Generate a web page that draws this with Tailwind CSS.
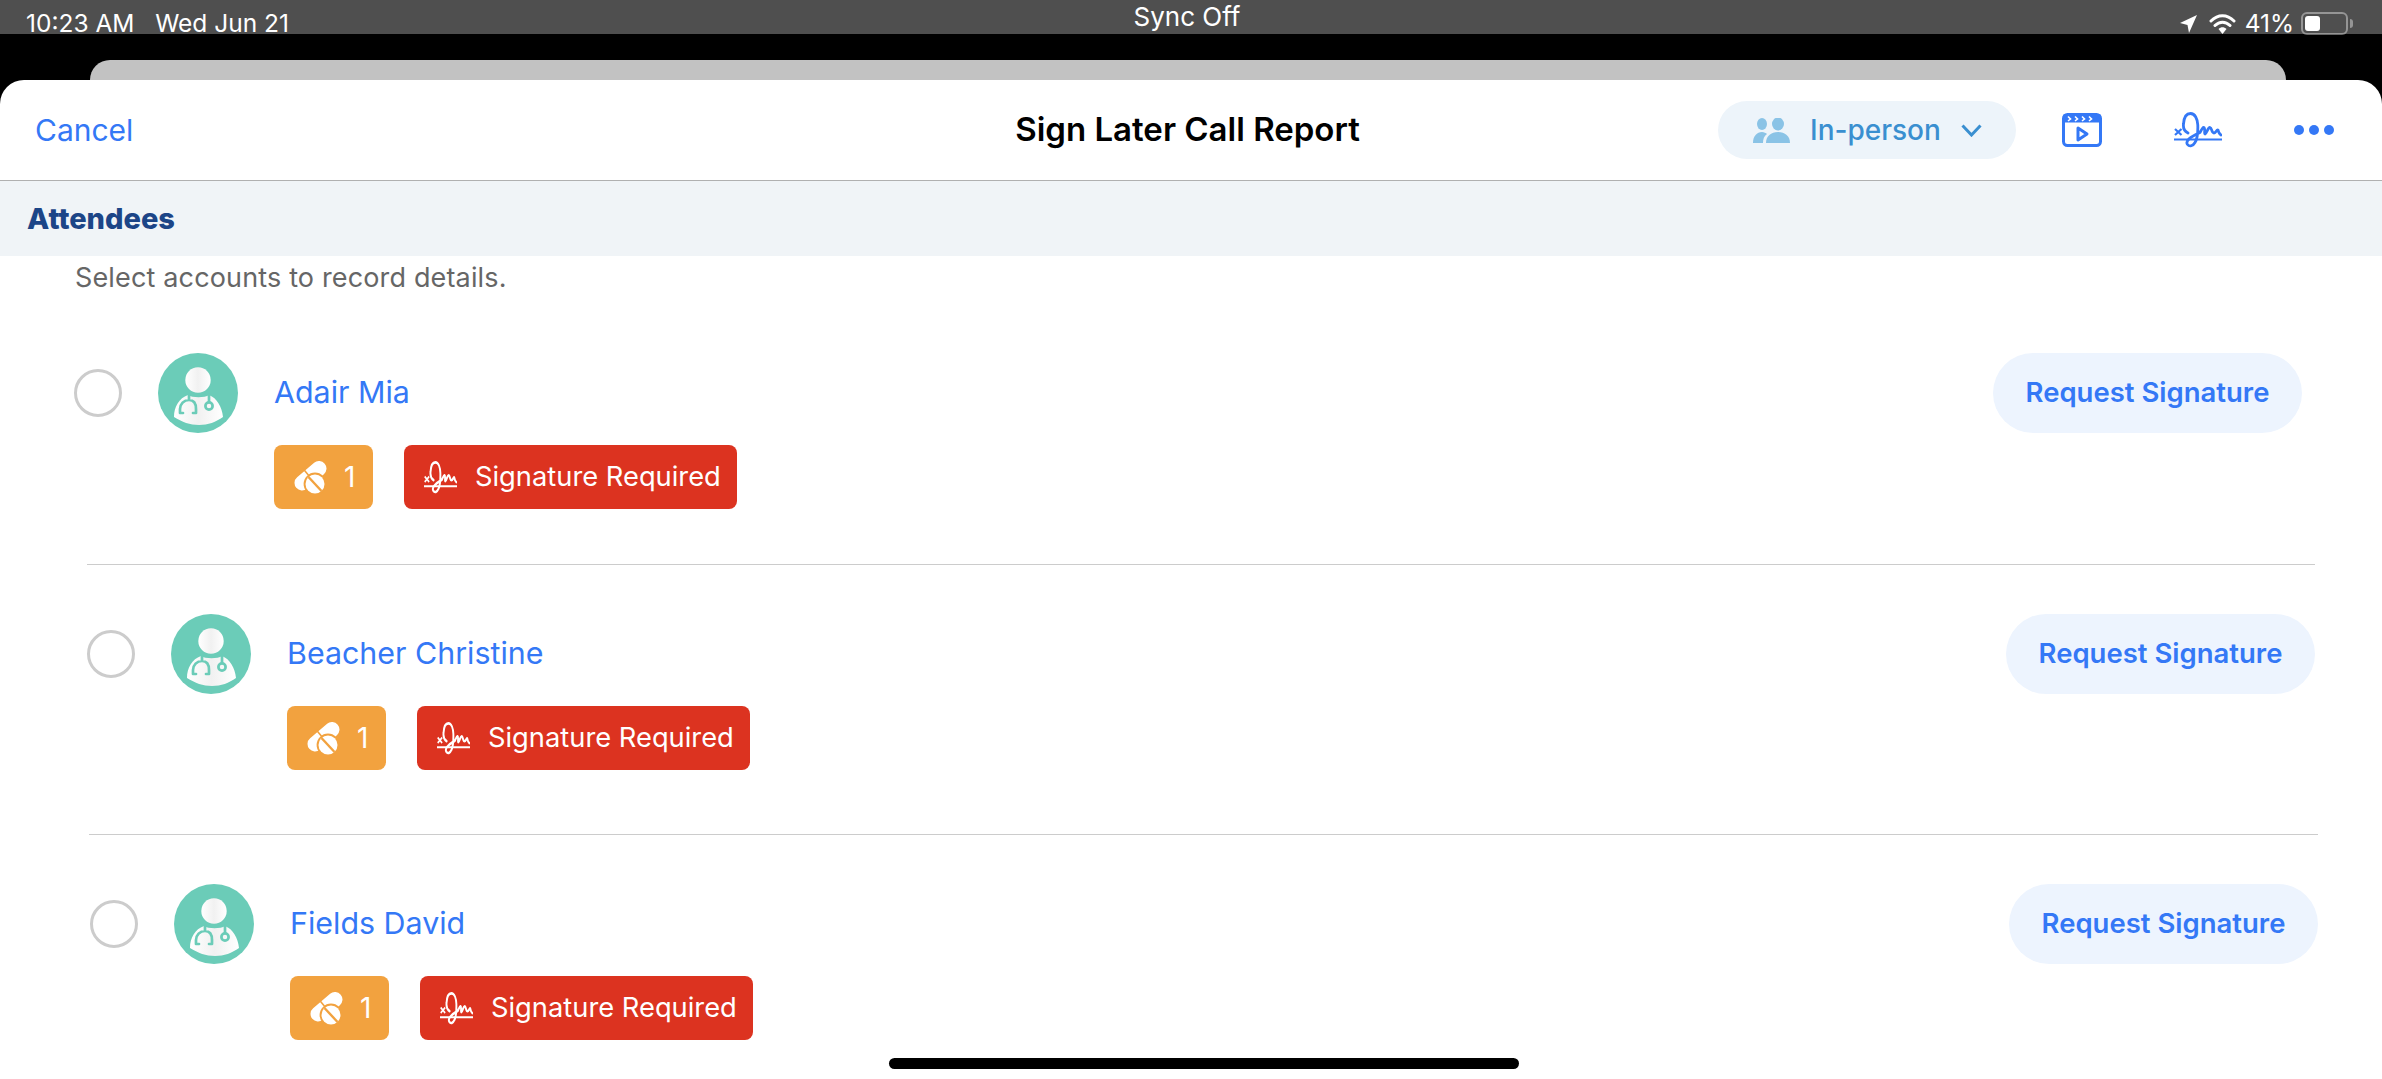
<!DOCTYPE html>
<html lang="en">
<head>
    <meta charset="UTF-8">
    <meta name="viewport" content="width=device-width, initial-scale=1.0">
    <title>Sign Later Call Report</title>
    <script src="https://cdn.jsdelivr.net/npm/@tailwindcss/browser@4"></script>
</head>
<body class="bg-black font-['Inter',sans-serif] overflow-hidden">
    <!-- shared icons -->
    <svg class="absolute w-0 h-0" width="0" height="0">
        <defs>
            <linearGradient id="coat" x1="0" x2="1" y1="0" y2="0">
                <stop offset="0" stop-color="#ffffff"/>
                <stop offset="0.5" stop-color="#f1f1f1"/>
                <stop offset="1" stop-color="#ffffff"/>
            </linearGradient>
            <symbol id="doctor" viewBox="0 0 80 80">
                <circle cx="40" cy="40" r="40" fill="#6bccb8"/>
                <circle cx="40" cy="27" r="12.7" fill="url(#coat)"/>
                <path d="M30 42 C21 45 16 54 16 64 C24 69 32 72 41 72 C50 72 58 69 65 64 C64 54 59 45 51 42 C47 45 34 45 30 42 Z" fill="url(#coat)"/>
                <path d="M31 42 L31 47 C26 47 22 51 22 56 L22 60 L25 60 M31 47 C36 47 38 51 38 56 L38 60 L35 60 M51 42 L51 49" fill="none" stroke="#6bccb8" stroke-width="2.7" stroke-linecap="round" stroke-linejoin="round"/>
                <circle cx="51" cy="53" r="3.6" fill="none" stroke="#6bccb8" stroke-width="2.7"/>
            </symbol>
            <symbol id="pills" viewBox="0 0 33 33">
                <path d="M25 7.5 L8 22" stroke="#fff" stroke-width="15" stroke-linecap="round"/>
                <path d="M8.5 7 L18.5 19" stroke="#f2a23f" stroke-width="1.6"/>
                <circle cx="21" cy="23" r="11.4" fill="#f2a23f"/>
                <circle cx="21" cy="23" r="9.5" fill="#fff"/>
                <path d="M14.5 16 L27.5 30" stroke="#f2a23f" stroke-width="2.4"/>
            </symbol>
            <symbol id="signature" viewBox="0 0 48 36" preserveAspectRatio="none">
                <path d="M14 21 C10 19 9 16 9.5 12 C10 5 13 1.5 16.5 1.5 C21 1.5 23.5 7 23.8 13 C24 20 24 26 21 30.5 C19 34 15.5 35 13.5 32.5 C11 29 16 25 26 20.5 C28 17 29 15 30 15.5 C31.5 16 30 22 31 22 C33 21 34 15 36 15.5 C38 16 37.5 21 40 21 C42 21 43 17 44 18 C44.5 20 45 22 47 23" fill="none" stroke="currentColor" stroke-width="2.8" stroke-linecap="round" stroke-linejoin="round"/>
                <path d="M0 27.5 L48 27.5" stroke="currentColor" stroke-width="2.2"/>
                <path d="M1 17 L7.5 23 M7.5 17 L1 23" stroke="currentColor" stroke-width="2.2"/>
            </symbol>
        </defs>
    </svg>

    <div class="flex flex-col h-screen relative">
        <!-- Status bar -->
        <div class="h-[34px] bg-[#4f4f4f] text-white text-[24.5px] grid grid-cols-[1fr_auto_1fr] shrink-0">
            <div class="pl-[26px] pt-[12px] leading-[22px] whitespace-pre">10:23 AM   Wed Jun 21</div>
            <div class="pt-[2px] leading-[29px] text-[26px] -translate-x-[4px]">Sync Off</div>
            <div class="flex justify-end items-start pt-[12px] pr-[29px] leading-[22px]">
                <svg class="mt-[3px] mr-[12px]" width="17" height="18" viewBox="0 0 17 18"><path d="M17 0 L9 18 L7.5 10 L0 8 Z" fill="#fff"/></svg>
                <svg class="mt-[2px] mr-[9px]" width="27" height="20" viewBox="0 0 27 20"><path d="M2 7 C9 0 18 0 25 7 M6 11.5 C10.5 7 16.5 7 21 11.5" fill="none" stroke="#fff" stroke-width="3" stroke-linecap="round"/><path d="M9.5 15 C12 12.5 15 12.5 17.5 15 L13.5 20 Z" fill="#fff"/></svg>
                <span class="mr-[7px]">41%</span>
                <div class="w-[47px] h-[23px] rounded-[6px] border-2 border-white/40 p-[2px]">
                    <div class="w-[15px] h-full bg-white rounded-[3px]"></div>
                </div>
                <div class="w-[3px] h-[9px] bg-white/40 rounded-r-sm mt-[7px] ml-[2px]"></div>
            </div>
        </div>

        <!-- Sheet behind -->
        <div class="mt-[26px] ml-[90px] w-[2196px] h-[20px] bg-[#c2c2c2] rounded-t-[22px] shrink-0"></div>

        <!-- Sheet -->
        <div class="flex-1 bg-white rounded-t-[24px] overflow-hidden">
            <header class="h-[101px] border-b border-[#b0b0b0] grid grid-cols-[1fr_auto_1fr] items-center pl-[35px] pr-[42px]">
                <div class="text-[#3478f6] text-[30px]">Cancel</div>
                <div class="text-[33px] font-semibold text-black">Sign Later Call Report</div>
                <div class="flex items-center justify-end pr-[6px]">
                    <div class="w-[298px] h-[58px] rounded-full bg-[#edf4fa] flex items-center pl-[35px]">
                        <svg width="37" height="25" viewBox="0 0 37 25" fill="#8ac3e6">
                            <ellipse cx="9" cy="6" rx="5" ry="6"/>
                            <ellipse cx="25" cy="6" rx="6" ry="6.5"/>
                            <path d="M0 25 C0 18 4 14 9 14 C11 14 13 15 14 16 C11 18 10 21 10 25 Z"/>
                            <path d="M13 25 C13 18 18 14 25 14 C32 14 37 18 37 25 Z"/>
                        </svg>
                        <span class="ml-[20px] text-[28px] font-medium text-[#3a8fd0]">In-person</span>
                        <svg class="ml-[20px]" width="21" height="13" viewBox="0 0 21 13"><path d="M1.5 1.5 L10.5 11 L19.5 1.5" fill="none" stroke="#3a8fd0" stroke-width="3"/></svg>
                    </div>
                    <svg class="ml-[46px]" width="40" height="34" viewBox="0 0 40 34">
                        <rect x="1.5" y="1.5" width="37" height="31" rx="4" fill="none" stroke="#3478f6" stroke-width="3"/>
                        <rect x="1.5" y="1.5" width="37" height="8" fill="#3478f6"/>
                        <path d="M6 3.5 L8.5 6 L6 8 M13 3.5 L15.5 6 L13 8 M20 3.5 L22.5 6 L20 8 M27 3.5 L29.5 6 L27 8" fill="none" stroke="#fff" stroke-width="1.6"/>
                        <path d="M16 15 L25 21 L16 27 Z" fill="none" stroke="#3478f6" stroke-width="3" stroke-linejoin="round"/>
                    </svg>
                    <svg class="ml-[72px] text-[#3478f6]" width="48" height="36"><use href="#signature"/></svg>
                    <div class="ml-[72px] flex gap-[5px]">
                        <div class="w-[10px] h-[10px] rounded-full bg-[#3478f6]"></div>
                        <div class="w-[10px] h-[10px] rounded-full bg-[#3478f6]"></div>
                        <div class="w-[10px] h-[10px] rounded-full bg-[#3478f6]"></div>
                    </div>
                </div>
            </header>

            <div class="h-[75px] bg-[#f0f4f7] flex items-center pl-[27px] text-[29px] font-extrabold text-[#1c4587]">Attendees</div>

            <div class="h-[44px] pl-[75px] text-[27px] tracking-[0.15px] leading-[44px] text-[#666666]">Select accounts to record details.</div>

            <!-- Adair Mia -->
            <div class="mt-[53px] ml-[74px] w-[2228px]">
                <div class="flex items-center h-[80px]">
                    <div class="w-[48px] h-[48px] rounded-full border-[3px] border-[#cccccc]"></div>
                    <svg class="ml-[36px]" width="80" height="80"><use href="#doctor"/></svg>
                    <div class="ml-[36px] text-[30.4px] text-[#3478f6]">Adair Mia</div>
                    <div class="ml-auto w-[309px] h-[80px] rounded-full bg-[#edf4fe] flex items-center justify-center text-[27.5px] font-semibold text-[#3478f6]">Request Signature</div>
                </div>
                <div class="flex gap-[31px] mt-[12px] ml-[200px]">
                    <div class="w-[99px] h-[64px] rounded-[8px] bg-[#f2a23f] flex items-center pl-[20px] text-white text-[28px]">
                        <svg width="33" height="33"><use href="#pills"/></svg>
                        <span class="ml-[17px]">1</span>
                    </div>
                    <div class="w-[333px] h-[64px] rounded-[8px] bg-[#dc3320] flex items-center pl-[20px] text-white text-[27.3px]">
                        <svg width="33" height="33"><use href="#signature"/></svg>
                        <span class="ml-[18px]">Signature Required</span>
                    </div>
                </div>
            </div>
            <div class="mt-[55px] ml-[87px] w-[2228px] h-px bg-[#cccccc]"></div>

            <!-- Beacher Christine -->
            <div class="mt-[49px] ml-[87px] w-[2228px]">
                <div class="flex items-center h-[80px]">
                    <div class="w-[48px] h-[48px] rounded-full border-[3px] border-[#cccccc]"></div>
                    <svg class="ml-[36px]" width="80" height="80"><use href="#doctor"/></svg>
                    <div class="ml-[36px] text-[30.4px] text-[#3478f6]">Beacher Christine</div>
                    <div class="ml-auto w-[309px] h-[80px] rounded-full bg-[#edf4fe] flex items-center justify-center text-[27.5px] font-semibold text-[#3478f6]">Request Signature</div>
                </div>
                <div class="flex gap-[31px] mt-[12px] ml-[200px]">
                    <div class="w-[99px] h-[64px] rounded-[8px] bg-[#f2a23f] flex items-center pl-[20px] text-white text-[28px]">
                        <svg width="33" height="33"><use href="#pills"/></svg>
                        <span class="ml-[17px]">1</span>
                    </div>
                    <div class="w-[333px] h-[64px] rounded-[8px] bg-[#dc3320] flex items-center pl-[20px] text-white text-[27.3px]">
                        <svg width="33" height="33"><use href="#signature"/></svg>
                        <span class="ml-[18px]">Signature Required</span>
                    </div>
                </div>
            </div>
            <div class="mt-[64px] ml-[89px] w-[2229px] h-px bg-[#cccccc]"></div>

            <!-- Fields David -->
            <div class="mt-[49px] ml-[90px] w-[2228px]">
                <div class="flex items-center h-[80px]">
                    <div class="w-[48px] h-[48px] rounded-full border-[3px] border-[#cccccc]"></div>
                    <svg class="ml-[36px]" width="80" height="80"><use href="#doctor"/></svg>
                    <div class="ml-[36px] text-[30.4px] text-[#3478f6]">Fields David</div>
                    <div class="ml-auto w-[309px] h-[80px] rounded-full bg-[#edf4fe] flex items-center justify-center text-[27.5px] font-semibold text-[#3478f6]">Request Signature</div>
                </div>
                <div class="flex gap-[31px] mt-[12px] ml-[200px]">
                    <div class="w-[99px] h-[64px] rounded-[8px] bg-[#f2a23f] flex items-center pl-[20px] text-white text-[28px]">
                        <svg width="33" height="33"><use href="#pills"/></svg>
                        <span class="ml-[17px]">1</span>
                    </div>
                    <div class="w-[333px] h-[64px] rounded-[8px] bg-[#dc3320] flex items-center pl-[20px] text-white text-[27.3px]">
                        <svg width="33" height="33"><use href="#signature"/></svg>
                        <span class="ml-[18px]">Signature Required</span>
                    </div>
                </div>
            </div>
        </div>

        <!-- Home indicator -->
        <div class="absolute left-[889px] bottom-[10px] w-[630px] h-[11px] rounded-full bg-black"></div>
    </div>
</body>
</html>
